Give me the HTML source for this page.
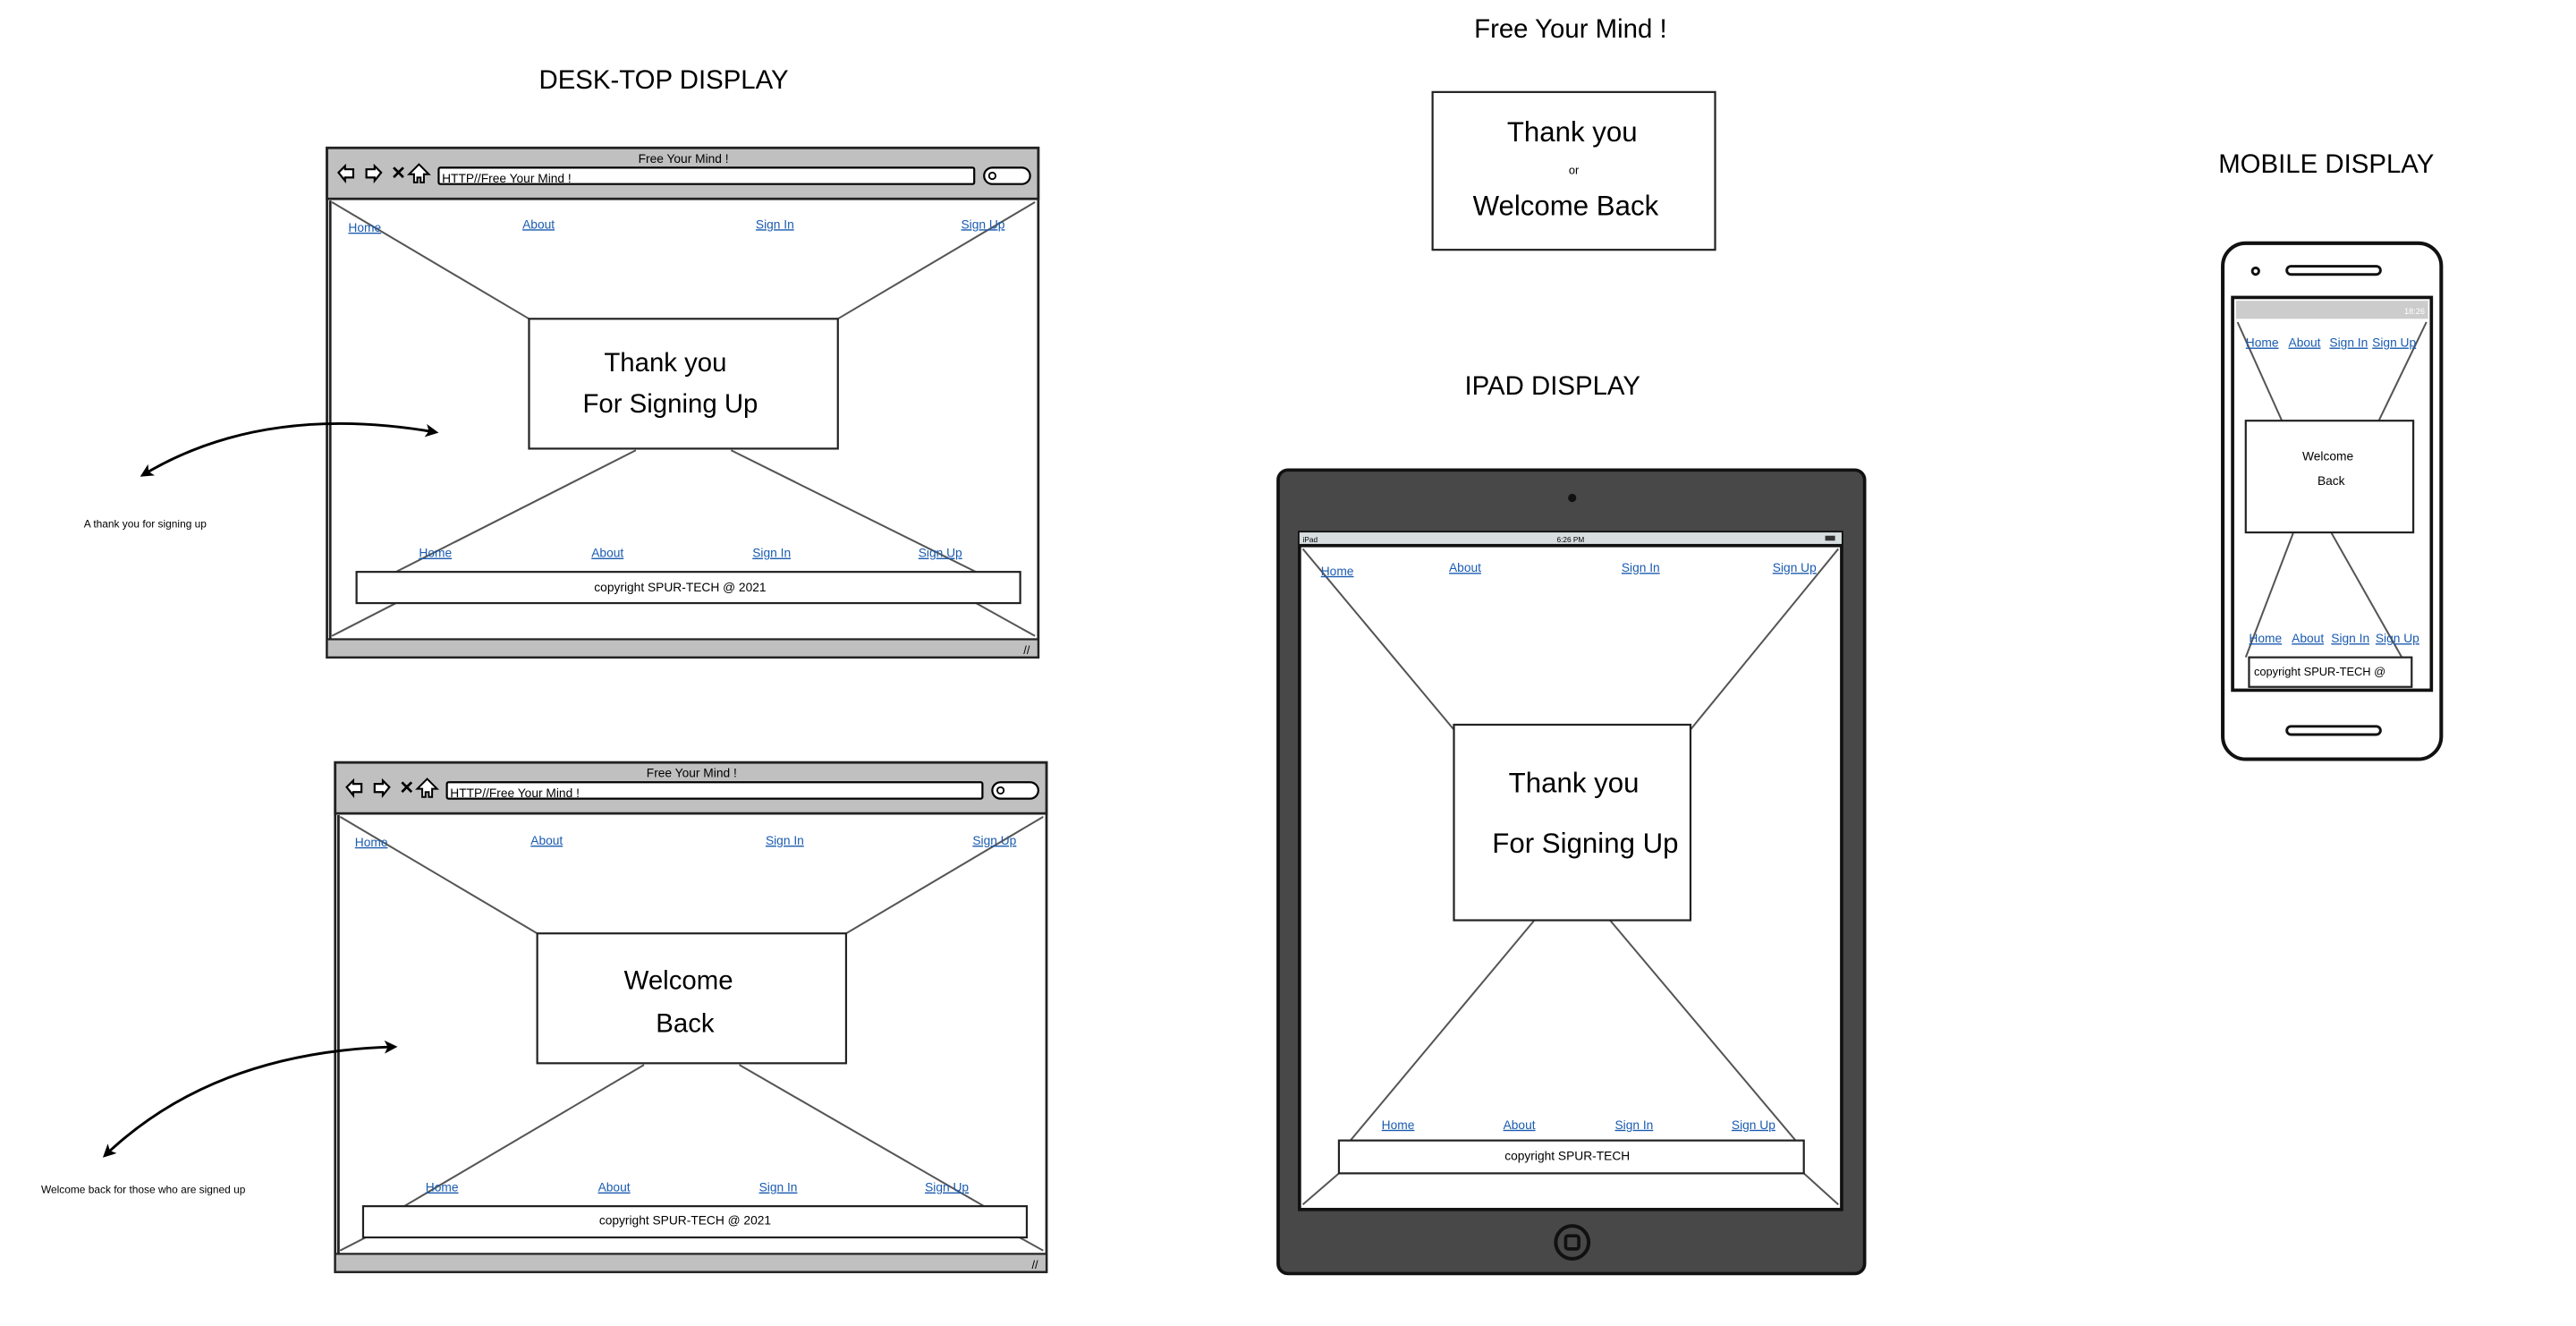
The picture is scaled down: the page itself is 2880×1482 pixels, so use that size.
<!DOCTYPE html>
<html><head><meta charset="utf-8"><style>
html,body{margin:0;padding:0;background:#fff;width:2880px;height:1482px;overflow:hidden}
svg{display:block}
text{font-family:"Liberation Sans",sans-serif;fill:#000}
.l{fill:#1a5bb0;text-decoration:underline}
</style></head><body>
<svg width="2880" height="1482" viewBox="0 0 1568 806.9" xmlns="http://www.w3.org/2000/svg">
<defs>
<marker id="ah" markerWidth="8" markerHeight="8" refX="6" refY="4" orient="auto-start-reverse" markerUnits="userSpaceOnUse"><path d="M0,0 L8,4 L0,8 L2,4Z" fill="#000"/></marker>
<g id="browser">
 <rect x="0" y="0" width="433" height="310" fill="#fff" stroke="#222" stroke-width="1.5"/>
 <rect x="0" y="0" width="433" height="31" fill="#c0c0c0" stroke="#222" stroke-width="1.5"/>
 <rect x="0" y="299" width="433" height="11" fill="#c0c0c0" stroke="#222" stroke-width="1.2"/>
 <line x1="2" y1="32" x2="2" y2="299" stroke="#222" stroke-width="1.5"/>
 <text x="217" y="9" font-size="7.5" text-anchor="middle">Free Your Mind !</text>
 <path d="M7,15 l4,-4 v2 h5 v5 h-5 v2z" fill="#fff" stroke="#000" stroke-width="1.2"/>
 <path d="M33,15 l-4,-4 v2 h-5 v5 h5 v2z" fill="#fff" stroke="#000" stroke-width="1.2"/>
 <text x="39" y="19" font-size="11" font-weight="bold">✕</text>
 <path d="M53,21 v-5 h-3 l6,-6 l6,6 h-3 v5 h-2 v-3 h-2 v3z" fill="#fff" stroke="#000" stroke-width="1.1"/>
 <rect x="68" y="12" width="326" height="10" rx="1" fill="#fff" stroke="#000" stroke-width="1.2"/>
 <text x="70" y="21" font-size="7.5">HTTP//Free Your Mind !</text>
 <rect x="400" y="12" width="28" height="10" rx="5" fill="#fff" stroke="#000" stroke-width="1.2"/>
 <circle cx="405" cy="17" r="2" fill="none" stroke="#000" stroke-width="1"/>
 <text x="424" y="308" font-size="7">//</text>
</g>
</defs>

<text x="404" y="54" font-size="16" text-anchor="middle">DESK-TOP DISPLAY</text>
<text x="956" y="23" font-size="16" text-anchor="middle">Free Your Mind !</text>
<text x="945" y="240" font-size="16" text-anchor="middle">IPAD DISPLAY</text>
<text x="1416" y="105" font-size="16" text-anchor="middle">MOBILE DISPLAY</text>

<rect x="872" y="56" width="172" height="96" fill="#fff" stroke="#222" stroke-width="1.2"/>
<text x="957" y="86" font-size="17" text-anchor="middle">Thank you</text>
<text x="958" y="106" font-size="7" text-anchor="middle">or</text>
<text x="953" y="131" font-size="17" text-anchor="middle">Welcome Back</text>

<g transform="translate(199,90)">
 <use href="#browser"/>
 <g stroke="#555" stroke-width="1.1">
  <line x1="3" y1="33" x2="123" y2="104"/><line x1="431" y1="33" x2="311" y2="104"/>
  <line x1="3" y1="297" x2="42" y2="277"/><line x1="431" y1="297" x2="395" y2="277"/>
  <line x1="188" y1="184" x2="42" y2="258"/><line x1="246" y1="184" x2="395" y2="258"/>
 </g>
 <rect x="123" y="104" width="188" height="79" fill="#fff" stroke="#222" stroke-width="1.2"/>
 <text x="206" y="136" font-size="16" text-anchor="middle">Thank you</text>
 <text x="209" y="161" font-size="16" text-anchor="middle">For Signing Up</text>
 <rect x="18" y="258" width="404" height="19" fill="#fff" stroke="#222" stroke-width="1.2"/>
 <text x="215" y="270" font-size="7.5" text-anchor="middle">copyright SPUR-TECH @ 2021</text>
 <g font-size="7.5"><text class="l" x="13" y="51">Home</text><text class="l" x="119" y="49">About</text><text class="l" x="261" y="49">Sign In</text><text class="l" x="386" y="49">Sign Up</text>
 <text class="l" x="56" y="249">Home</text><text class="l" x="161" y="249">About</text><text class="l" x="259" y="249">Sign In</text><text class="l" x="360" y="249">Sign Up</text></g>
</g>
<path d="M87,289 Q160,245 265,263" fill="none" stroke="#000" stroke-width="1.6" marker-end="url(#ah)" marker-start="url(#ah)"/>
<text x="51" y="321" font-size="6.5">A thank you for signing up</text>

<g transform="translate(204,464)">
 <use href="#browser"/>
 <g stroke="#555" stroke-width="1.1">
  <line x1="3" y1="33" x2="123" y2="104"/><line x1="431" y1="33" x2="311" y2="104"/>
  <line x1="3" y1="297" x2="42" y2="277"/><line x1="431" y1="297" x2="395" y2="277"/>
  <line x1="188" y1="184" x2="42" y2="270"/><line x1="246" y1="184" x2="395" y2="270"/>
 </g>
 <rect x="123" y="104" width="188" height="79" fill="#fff" stroke="#222" stroke-width="1.2"/>
 <text x="209" y="138" font-size="16" text-anchor="middle">Welcome</text>
 <text x="213" y="164" font-size="16" text-anchor="middle">Back</text>
 <rect x="17" y="270" width="404" height="19" fill="#fff" stroke="#222" stroke-width="1.2"/>
 <text x="213" y="281" font-size="7.5" text-anchor="middle">copyright SPUR-TECH @ 2021</text>
 <g font-size="7.5"><text class="l" x="12" y="51">Home</text><text class="l" x="119" y="50">About</text><text class="l" x="262" y="50">Sign In</text><text class="l" x="388" y="50">Sign Up</text>
 <text class="l" x="55" y="261">Home</text><text class="l" x="160" y="261">About</text><text class="l" x="258" y="261">Sign In</text><text class="l" x="359" y="261">Sign Up</text></g>
</g>
<path d="M64,703 Q130,640 240,637" fill="none" stroke="#000" stroke-width="1.6" marker-end="url(#ah)" marker-start="url(#ah)"/>
<text x="25" y="726" font-size="6.5">Welcome back for those who are signed up</text>

<rect x="778" y="286" width="357" height="489" rx="6" fill="#484848" stroke="#111" stroke-width="2"/>
<circle cx="957" cy="303" r="2.5" fill="#111"/>
<rect x="790" y="323" width="332" height="414" fill="#111"/>
<rect x="791" y="324" width="330" height="7" fill="#d8dde0"/>
<text x="793" y="330" font-size="4.5">iPad</text>
<text x="956" y="330" font-size="4.5" text-anchor="middle">6:26 PM</text>
<rect x="1111" y="326" width="6" height="3" fill="#333"/>
<rect x="792" y="333" width="328" height="402" fill="#fff"/>
<g stroke="#555" stroke-width="1.1">
 <line x1="793" y1="334" x2="885" y2="444"/><line x1="1119" y1="334" x2="1029" y2="444"/>
 <line x1="934" y1="560" x2="822" y2="694"/><line x1="980" y1="560" x2="1093" y2="694"/>
 <line x1="793" y1="733" x2="815" y2="714"/><line x1="1119" y1="733" x2="1098" y2="714"/>
</g>
<rect x="885" y="441" width="144" height="119" fill="#fff" stroke="#222" stroke-width="1.2"/>
<text x="958" y="482" font-size="17" text-anchor="middle">Thank you</text>
<text x="965" y="519" font-size="17" text-anchor="middle">For Signing Up</text>
<rect x="815" y="694" width="283" height="20" fill="#fff" stroke="#222" stroke-width="1.2"/>
<text x="954" y="706" font-size="7.5" text-anchor="middle">copyright SPUR-TECH</text>
<g font-size="7.5"><text class="l" x="804" y="350">Home</text><text class="l" x="882" y="348">About</text><text class="l" x="987" y="348">Sign In</text><text class="l" x="1079" y="348">Sign Up</text>
<text class="l" x="841" y="687">Home</text><text class="l" x="915" y="687">About</text><text class="l" x="983" y="687">Sign In</text><text class="l" x="1054" y="687">Sign Up</text></g>
<circle cx="957" cy="756" r="10" fill="none" stroke="#111" stroke-width="2.2"/>
<rect x="953" y="752" width="8" height="8" rx="1.5" fill="none" stroke="#111" stroke-width="2"/>

<rect x="1353" y="148" width="133" height="314" rx="14" fill="#fff" stroke="#111" stroke-width="2.2"/>
<circle cx="1373" cy="165" r="2" fill="none" stroke="#111" stroke-width="1.6"/>
<rect x="1392" y="162" width="57" height="5" rx="2.5" fill="none" stroke="#111" stroke-width="1.6"/>
<rect x="1392" y="442" width="57" height="5" rx="2.5" fill="none" stroke="#111" stroke-width="1.6"/>
<rect x="1359" y="181" width="121" height="239" fill="#fff" stroke="#111" stroke-width="2"/>
<rect x="1361" y="183" width="117" height="11" fill="#ccc"/>
<text x="1476" y="191" font-size="5" style="fill:#fff" text-anchor="end">18:26</text>
<g stroke="#555" stroke-width="1.1">
 <line x1="1362" y1="196" x2="1389" y2="256"/><line x1="1477" y1="196" x2="1448" y2="256"/>
 <line x1="1396" y1="324" x2="1367" y2="400"/><line x1="1419" y1="324" x2="1462" y2="400"/>
</g>
<rect x="1367" y="256" width="102" height="68" fill="#fff" stroke="#222" stroke-width="1.2"/>
<text x="1417" y="280" font-size="7.5" text-anchor="middle">Welcome</text>
<text x="1419" y="295" font-size="7.5" text-anchor="middle">Back</text>
<rect x="1369" y="400" width="99" height="18" fill="#fff" stroke="#222" stroke-width="1.2"/>
<text x="1372" y="411" font-size="7">copyright SPUR-TECH @</text>
<g font-size="7.5"><text class="l" x="1367" y="211">Home</text><text class="l" x="1393" y="211">About</text><text class="l" x="1418" y="211">Sign In</text><text class="l" x="1444" y="211">Sign Up</text>
<text class="l" x="1369" y="391">Home</text><text class="l" x="1395" y="391">About</text><text class="l" x="1419" y="391">Sign In</text><text class="l" x="1446" y="391">Sign Up</text></g>
</svg>
</body></html>
